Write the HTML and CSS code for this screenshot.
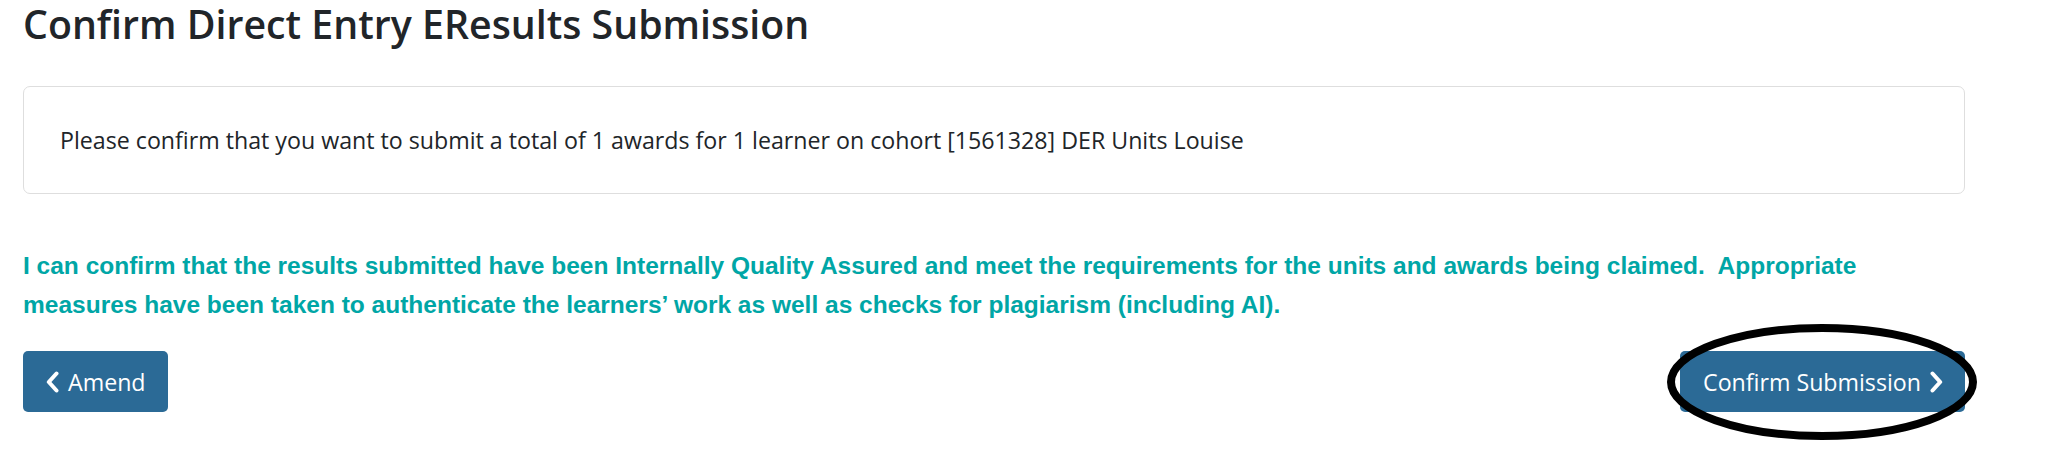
FILE: index.html
```html
<!DOCTYPE html>
<html lang="en">
<head>
<meta charset="utf-8">
<title>Confirm Direct Entry EResults Submission</title>
<link rel="stylesheet" href="styles.css">
</head>
<body>
<main class="page">
  <h1 class="title">Confirm Direct Entry EResults Submission</h1>
  <section class="card">
    <p class="card-text">Please confirm that you want to submit a total of 1 awards for 1 learner on cohort [1561328] DER Units Louise</p>
  </section>
  <p class="declaration">I can confirm that the results submitted have been Internally Quality Assured and meet the requirements for the units and awards being claimed.&nbsp; Appropriate measures have been taken to authenticate the learners’ work as well as checks for plagiarism (including AI).</p>
  <div class="actions">
    <button class="btn" type="button">
      <svg class="chev" viewBox="0 0 13 22" width="13" height="22" aria-hidden="true"><path d="M10.5 2.5 L2.8 11 L10.5 19.5" fill="none" stroke="#fff" stroke-width="4" stroke-linecap="round" stroke-linejoin="round"/></svg>
      <span>Amend</span>
    </button>
    <div class="confirm-wrap">
      <button class="btn" type="button">
        <span>Confirm Submission</span>
        <svg class="chev" viewBox="0 0 13 22" width="13" height="22" aria-hidden="true"><path d="M2.5 2.5 L10.2 11 L2.5 19.5" fill="none" stroke="#fff" stroke-width="4" stroke-linecap="round" stroke-linejoin="round"/></svg>
      </button>
      <svg class="ring" viewBox="0 0 310 116" width="310" height="116" aria-hidden="true"><ellipse cx="155" cy="58" rx="151" ry="54" fill="none" stroke="#000" stroke-width="8"/></svg>
    </div>
  </div>
</main>
</body>
</html>
```
FILE: styles.css
```css
html, body {
  margin: 0;
  padding: 0;
  background: #fff;
}
.page {
  width: 1942px;
  margin-left: 23px;
  padding-bottom: 48px;
  display: flex;
  flex-direction: column;
}
.title {
  margin: 0;
  font-family: "Open Sans", "Noto Sans", sans-serif;
  font-weight: 600;
  font-size: 39.3px;
  line-height: 48px;
  color: #212529;
}
.card {
  margin-top: 38px;
  height: 108px;
  box-sizing: border-box;
  border: 1px solid #dedede;
  border-radius: 7px;
  padding: 0 36px;
  display: flex;
  align-items: center;
}
.card-text {
  margin: 0;
  font-family: "Open Sans", "Noto Sans", sans-serif;
  font-size: 23.2px;
  color: #212529;
}
.declaration {
  margin: 52px 0 0 0;
  font-family: "Liberation Sans Narrow", "Liberation Sans", Arial, sans-serif;
  font-weight: 700;
  font-size: 24.5px;
  line-height: 39px;
  color: #00a6a6;
}
.actions {
  margin-top: 27px;
  display: flex;
  justify-content: space-between;
  align-items: center;
}
.btn {
  height: 61px;
  box-sizing: border-box;
  border: 0;
  border-radius: 5px;
  background: #2b6a96;
  color: #fff;
  font-family: "Open Sans", "Noto Sans", sans-serif;
  font-size: 23.2px;
  padding: 0 22px 0 23px;
  display: flex;
  align-items: center;
  gap: 9px;
}
.chev {
  display: block;
}
.confirm-wrap {
  position: relative;
}
.ring {
  position: absolute;
  left: -13px;
  top: -27px;
  pointer-events: none;
}
```
